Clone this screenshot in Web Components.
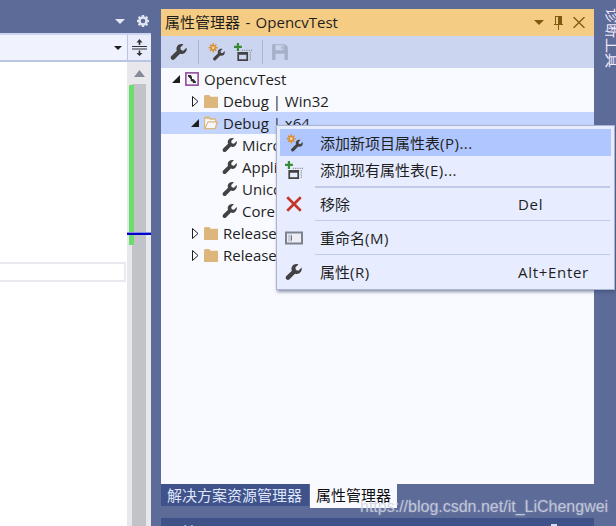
<!DOCTYPE html>
<html>
<head>
<meta charset="utf-8">
<style>
  html, body { margin: 0; height: 100%; }
  body {
    width: 616px;
    height: 526px;
    overflow: hidden;
    background: #5d6b99;
    font: 15px/22px "Open Sans", "Noto Sans CJK SC", sans-serif;
    color: #1e1e1e;
    display: grid;
    grid-template-columns: 151px 10px 433px 22px;
    position: relative;
  }
</style>
</head>
<body>
<editor-pane></editor-pane>
<span></span>
<side-panel></side-panel>
<diag-strip>诊断工具</diag-strip>
<water-mark>https://blog.csdn.net/it_LiChengwei</water-mark>

<script>
const ICONS = {
  wrench: `<path fill="#424242" d="M14.7 4.1 12 6.8 9.7 6.3 9.2 4 11.9 1.3C9.8.5 7.4 1.2 6.3 3c-.7 1.2-.8 2.6-.2 3.8L1.2 11.6c-.8.8-.8 2 0 2.8s2 .8 2.8 0l4.9-4.9c1.2.6 2.7.5 3.9-.3 1.7-1.1 2.5-3.2 1.9-5.1z"/>`,
  wizard: `<path fill="#d98a2b" d="M5 0h1l.3 2.2L8 1l.7.7L7.4 3.4 9.6 3.7v1L7.4 5l1.3 1.7L8 7.4 6.3 6.2 6 8.4H5L4.700 6.200 3 7.400l-.7-.7L3.600 5 1.400 4.700v-1L3.600 3.400 2.300 1.700 3 1l1.700 1.200z"/><circle cx="5.500" cy="4.200" r="1.300" fill="#f6d9a0"/><path fill="#424242" d="M15.600 7.200 13.800 9 12.300 8.600 12 7.100l1.800-1.800c-1.400-.5-3-.1-3.800 1.200-.5.8-.5 1.800-.2 2.600l-4 4c-.6.600-.6 1.400 0 2s1.400.6 2 0l4-4c.8.4 1.900.3 2.700-.2 1.200-.8 1.600-2.300 1.100-3.700z"/>`,
  addfile: `<path fill="#388a34" d="M2.500 0h2v2.500H7v2H4.500V7h-2V4.500H0v-2h2.500z"/><path fill="#424242" d="M3 8h9.500v8H3zm1.500 2.500v4h6.500v-4z" fill-rule="evenodd"/><path fill="#8c8c8c" d="M7 6h1v1H7zm2 0h1v1H9zm2 0h1v1h-1zm2 0h1v1h-1zm2 0h1v1h-1zm-1 2h1v1h-1zm0 2h1v1h-1zm0 2h1v1h-1zm0 2h1v1h-1z"/>`,
  save: `<path fill="#a8b0c6" fill-rule="evenodd" d="M1 1h11.500L15 3.500V15H1zm3 1v4.500h7V2zm5 .8h1.300v2.800H9zM4 9.500V15h8V9.500z"/>`,
  project: `<rect x="1" y="1" width="14" height="14" fill="#f6f6fb" stroke="#8a3f92" stroke-width="1.700"/><path fill="#2b2b2b" d="M3.500 3.500h3.500v1L8 5.500V8H6.500L3.500 5zM8 8h1.500l3 3v1.500H9v-1L8 10.500z"/><path fill="#2b2b2b" d="M6.500 8H8v2.500H6.500z"/>`,
  folder: `<path fill="#dcb67a" d="M0 2.500 1 1h5l1.500 2H16v13H0z"/>`,
  folderopen: `<path fill="#dcb67a" d="M0 2 1 .5h5L7.500 2.500H14V6h1.500L16 7l-2.500 8H0z"/><path fill="#f6f7fd" d="M1.300 3h4.200l1.300 1.300h5.700V6H4.500L1.300 12z"/><path fill="#f6f7fd" d="M5 7.500h9L12.300 13.700H2z"/>`,
  close: `<path fill="none" stroke="#c4352a" stroke-width="2.400" d="M2 2l12 12M14 2 2 14"/>`,
  rename: `<rect x="1" y="2" width="16" height="11" fill="#eceef4" stroke="#7b8391" stroke-width="2"/><path fill="#c9cdd8" d="M3 4h4v7H3z"/><path fill="#6c7280" d="M6 5h1v5H6z"/>`
};

class VsIcon extends HTMLElement {
  constructor() {
    super();
    this.attachShadow({ mode: "open" });
    const size = this.getAttribute("size") || 16;
    const box = this.getAttribute("box") || "0 0 16 16";
    this.shadowRoot.innerHTML = `
      <style>:host{display:inline-flex;flex:none;width:${size}px;height:${size}px;} svg{display:block;}</style>
      <svg width="${size}" height="${size}" viewBox="${box}">${ICONS[this.getAttribute("name")] || ""}</svg>`;
  }
}

class EditorPane extends HTMLElement {
  constructor() {
    super();
    this.attachShadow({ mode: "open" });
    this.shadowRoot.innerHTML = `
      <style>
        :host{display:flex;flex-direction:column;height:526px;padding-top:8px;box-sizing:border-box;}
        #tabs{height:25px;flex:none;display:flex;justify-content:flex-end;align-items:center;gap:12px;padding-right:2px;box-sizing:border-box;}
        #tabs svg:first-child{margin-top:2px;}
        #bar{height:29px;flex:none;display:flex;box-sizing:border-box;background:#f0f3fd;border-top:2px solid #ccd5f0;border-bottom:2px solid #b9c6e3;}
        #combo{flex:1;display:flex;justify-content:flex-end;align-items:center;padding-right:5px;}
        #split{width:23px;flex:none;background:#e9edfb;border-left:1px solid #b9c6e3;display:flex;align-items:center;justify-content:center;}
        #body{flex:1;display:flex;min-height:0;}
        #doc{flex:1;background:#fff;padding-top:200px;}
        #input{height:16px;margin-right:1px;border:2px solid #e9e9f0;border-left:0;background:#fff;}
        #scroll{width:24px;flex:none;background:#e8e8ec;position:relative;display:flex;flex-direction:column;align-items:center;}
        #up{margin-top:8px;height:7px;flex:none;}
        #thumb{margin-top:7px;flex:1;width:14px;background:#c2c3c9;}
        #green{position:absolute;left:2px;top:23px;width:5px;height:160px;background:#6cdc6c;}
        #mark{position:absolute;left:0;right:0;top:171px;height:2px;background:#0000cd;box-shadow:0 -1px 0 #8a8ee0;}
      </style>
      <div id="tabs">
        <svg width="10" height="5" viewBox="0 0 10 5"><path fill="#e4e8f6" d="M0 0h10L5 5z"/></svg>
        <svg width="12" height="12" viewBox="0 0 13 13"><path fill="#dfe4f4" fill-rule="evenodd" d="M5.300 0h2.400l.3 1.700 1 .4L10.500 1l1.500 1.600-1 1.400.4 1 1.600.3v2.400l-1.600.3-.4 1 1 1.400-1.500 1.600L9 10.900l-1 .4-.3 1.700H5.300L5 11.300l-1-.4L2.500 12 1 10.400 2 9l-.4-1L0 7.700V5.300L1.600 5l.4-1L1 2.600 2.500 1 4 2.100l1-.4zM6.500 4a2.500 2.500 0 1 0 0 5 2.500 2.500 0 0 0 0-5z"/></svg>
      </div>
      <div id="bar">
        <div id="combo"><svg width="8" height="4" viewBox="0 0 8 4"><path fill="#1e1e1e" d="M0 0h8L4 4z"/></svg></div>
        <div id="split"><svg width="15" height="17" viewBox="0 0 15 17"><path fill="#333" d="M7.500 0 10.500 3.500H8.300V6H6.700V3.500H4.500zM0 7h15v1H0zM0 9.500h15v1H0zM6.700 11.500h1.600V14h2.200L7.500 17 4.500 14h2.200z"/></svg></div>
      </div>
      <div id="body">
        <div id="doc"><div id="input"></div></div>
        <div id="scroll">
          <svg id="up" width="11" height="7" viewBox="0 0 11 7"><path fill="#868999" d="M5.500 0 11 7H0z"/></svg>
          <div id="thumb"></div>
          <div id="green"></div>
          <div id="mark"></div>
        </div>
      </div>`;
  }
}

class SidePanel extends HTMLElement {
  constructor() {
    super();
    this.attachShadow({ mode: "open" });
    this.shadowRoot.innerHTML = `
      <style>
        :host{display:flex;flex-direction:column;height:526px;padding-top:9px;box-sizing:border-box;overflow:hidden;position:relative;}
        #title,#toolbar,#tree,#tabs,#next{flex:none;}
        #title{height:27px;background:#f5cc84;display:flex;align-items:center;padding:0 9px 0 4px;box-sizing:border-box;}
        #title span{flex:1;word-spacing:1.500px;margin-top:-2px;}
        #title svg{margin-left:10px;}
        #toolbar{height:32px;background:#ccd5f0;display:flex;align-items:center;padding-left:9px;box-sizing:border-box;}
        #toolbar vs-icon{margin-right:9px;}
        .sep{width:1px;height:24px;background:#aab5d2;margin:0 8px 0 1px;}
        #tree{height:416px;background:#f9faff;}
        #tabs{height:24px;display:flex;align-items:flex-start;}
        .tab{height:22px;line-height:22px;padding:0 6px;background:#3f5289;color:#dfe6fb;width:136px;margin-right:1px;white-space:nowrap;}
        .tab.on{height:24px;background:#f9faff;color:#0e0e0e;width:75px;}
        #next{margin-top:10px;height:20px;background:#3e5189;color:#fff;padding:3px 6px 0;box-sizing:border-box;line-height:22px;display:flex;justify-content:space-between;}
        #next svg{margin:3px 31px 0 0;}
      </style>
      <div id="title"><span>属性管理器 - OpencvTest</span>
        <svg width="10" height="5" viewBox="0 0 10 5"><path fill="#7d5a12" d="M0 0h10L5 5z"/></svg>
        <svg width="9" height="14" viewBox="0 0 9 14"><path fill="#7d5a12" fill-rule="evenodd" d="M1 0h7v8h1v1H5v5H4V9H0V8h1zm1 1v7h2V1z"/></svg>
        <svg width="12" height="11" viewBox="0 0 12 11"><path fill="none" stroke="#7d5a12" stroke-width="1.300" d="M.5 0 11.500 11M11.500 0 .5 11"/></svg>
      </div>
      <div id="toolbar">
        <vs-icon name="wrench" size="18"></vs-icon>
        <div class="sep"></div>
        <vs-icon name="wizard" size="18"></vs-icon>
        <vs-icon name="addfile" size="18"></vs-icon>
        <div class="sep"></div>
        <vs-icon name="save" size="18"></vs-icon>
      </div>
      <div id="tree">
        <tree-row indent="10" arrow="open" icon="project">OpencvTest</tree-row>
        <tree-row indent="29" arrow="closed" icon="folder">Debug | Win32</tree-row>
        <tree-row indent="29" arrow="open" icon="folderopen" selected>Debug | x64</tree-row>
        <tree-row indent="61" icon="wrench">Microsoft.Cpp.x64.user</tree-row>
        <tree-row indent="61" icon="wrench">Application</tree-row>
        <tree-row indent="61" icon="wrench">Unicode Support</tree-row>
        <tree-row indent="61" icon="wrench">Core Windows Libraries</tree-row>
        <tree-row indent="29" arrow="closed" icon="folder">Release | Win32</tree-row>
        <tree-row indent="29" arrow="closed" icon="folder">Release | x64</tree-row>
      </div>
      <div id="tabs"><div class="tab">解决方案资源管理器</div><div class="tab on">属性管理器</div></div>
      <div id="next"><span>属性</span><svg width="6" height="9" viewBox="0 0 6 9"><path fill="#d8deef" d="M0 0h6v9H0z"/></svg></div>`;
  }
}

class TreeRow extends HTMLElement {
  constructor() {
    super();
    this.attachShadow({ mode: "open" });
    const arrow = this.getAttribute("arrow");
    const glyph = arrow === "open"
      ? `<path fill="#1e1e1e" d="M9 1v8H1z"/>`
      : arrow === "closed" ? `<path fill="#f9faff" stroke="#1e1e1e" d="M2.500.5v10l5.500-5z"/>` : "";
    const icon = this.getAttribute("icon");
    this.shadowRoot.innerHTML = `
      <style>
        :host{display:flex;align-items:center;height:22px;padding-left:${this.getAttribute("indent")}px;white-space:nowrap;overflow:hidden;}
        :host([selected]){background:#c3d4fe;}
        #arrow{width:14px;flex:none;display:flex;justify-content:flex-start;}
        vs-icon{margin-right:5px;}
        vs-icon[name=wrench]{margin-right:4px;}
      </style>
      ${arrow ? `<div id="arrow"><svg width="10" height="11" viewBox="0 0 10 11">${glyph}</svg></div>` : ""}
      <vs-icon name="${icon}" size="${icon === "wrench" ? 16 : 14}"></vs-icon>
      <slot></slot>`;
  }
}

class ContextMenu extends HTMLElement {
  constructor() {
    super();
    this.attachShadow({ mode: "open" });
    this.shadowRoot.innerHTML = `
      <style>
        :host{position:absolute;left:276px;top:125px;width:339px;height:165px;box-sizing:border-box;background:#e7edfe;border:1px solid #a9b4cf;padding:3px;box-shadow:1px 2px 3px rgba(60,70,110,.55);display:block;}
        .sep{height:1px;background:#c0cbe8;margin-left:35px;margin-right:1px;}
        .sep.thick{height:2px;margin-top:3px;}
        span{letter-spacing:.5px;}
      </style>
      <menu-item icon="wizard" active height="27">添加新项目属性表<span>(P)...</span></menu-item>
      <menu-item icon="addfile" height="27">添加现有属性表<span>(E)...</span></menu-item>
      <div class="sep thick"></div>
      <menu-item icon="close" height="32" key="Del">移除</menu-item>
      <div class="sep"></div>
      <menu-item icon="rename" height="33" box="0 0 18 15">重命名<span>(M)</span></menu-item>
      <div class="sep"></div>
      <menu-item icon="wrench" height="33" key="Alt+Enter">属性<span>(R)</span></menu-item>`;
  }
}

class MenuItem extends HTMLElement {
  constructor() {
    super();
    this.attachShadow({ mode: "open" });
    this.shadowRoot.innerHTML = `
      <style>
        :host{display:flex;align-items:center;height:${this.getAttribute("height")}px;white-space:nowrap;}
        :host([active]){background:#b0c6fe;}
        vs-icon{margin:0 17px 0 5px;}
        #label{width:198px;flex:none;}
        #key{letter-spacing:.7px;}
      </style>
      <vs-icon name="${this.getAttribute("icon")}" size="18" box="${this.getAttribute("box") || "0 0 16 16"}"></vs-icon>
      <div id="label"><slot></slot></div>
      <div id="key">${this.getAttribute("key") || ""}</div>`;
  }
}

class DiagStrip extends HTMLElement {
  constructor() {
    super();
    this.attachShadow({ mode: "open" });
    this.shadowRoot.innerHTML = `
      <style>
        :host{display:block;height:526px;margin-left:10px;width:17px;padding-top:8px;box-sizing:border-box;color:#f1e8fa;font-size:15px;line-height:17px;writing-mode:vertical-rl;text-orientation:sideways;}
      </style><slot></slot>`;
  }
}

class WaterMark extends HTMLElement {
  constructor() {
    super();
    this.attachShadow({ mode: "open" });
    this.shadowRoot.innerHTML = `
      <style>
        :host{position:absolute;left:360px;top:497px;font:16px/20px "Liberation Sans",sans-serif;color:rgba(206,210,224,.85);text-shadow:0 0 2px rgba(255,255,255,.3);}
      </style><slot></slot>`;
  }
}

customElements.define("vs-icon", VsIcon);
customElements.define("tree-row", TreeRow);
customElements.define("menu-item", MenuItem);
customElements.define("context-menu", ContextMenu);
customElements.define("editor-pane", EditorPane);
customElements.define("side-panel", SidePanel);
customElements.define("diag-strip", DiagStrip);
customElements.define("water-mark", WaterMark);
document.body.appendChild(document.createElement("context-menu"));
</script>
</body>
</html>
